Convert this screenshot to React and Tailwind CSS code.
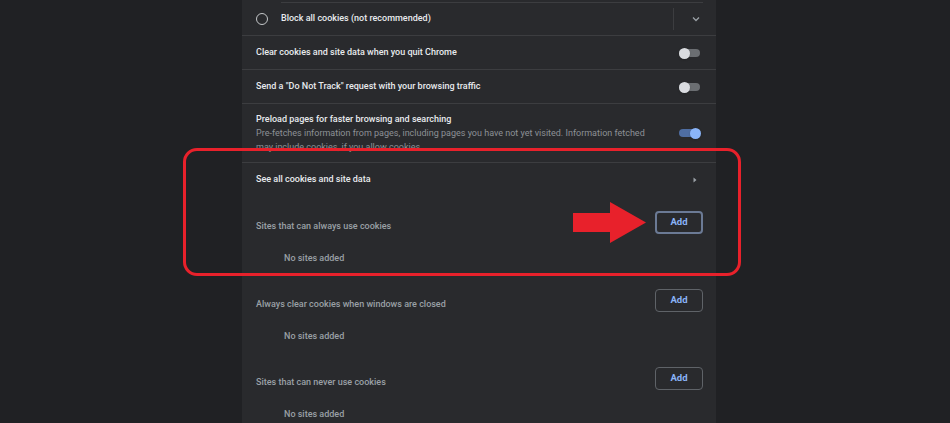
import React from 'react';

const Toggle = ({ on }) => (
  <div className="relative w-[22px] h-[12px] flex items-center">
    <div className={`w-[21px] h-[8px] rounded-full ${on ? 'bg-[#4f6ea3]' : 'bg-[#6b6e72]'}`} />
    <div
      className={`absolute top-[1px] w-[11px] h-[11px] rounded-full shadow ${on ? 'right-0 bg-[#8ab4f8]' : 'left-0 bg-[#dadce0]'}`}
    />
  </div>
);

const AddButton = ({ focused }) => (
  <button
    className={`w-[48px] h-[23px] mb-[9px] rounded-[4px] text-[9.5px] font-bold text-[#8ab4f8] ${focused ? 'border-2 border-[#6b7a95]' : 'border border-[#5f6368]'}`}
  >
    Add
  </button>
);

const Row = ({ children, className = '' }) => (
  <div className={`flex items-center justify-between pl-[14px] pr-[15px] border-t border-[#3c3d40] ${className}`}>
    {children}
  </div>
);

const SiteSection = ({ label, focused }) => (
  <div className="pb-[14px]">
    <div className="flex items-center justify-between h-[40px] pl-[14px] pr-[13px]">
      <span className="text-[9px] font-medium text-[#9aa0a6]">{label}</span>
      <AddButton focused={focused} />
    </div>
    <div className="h-[24px] flex items-center pl-[42px] text-[9px] font-medium text-[#9aa0a6]">
      No sites added
    </div>
  </div>
);

export default function App() {
  return (
    <div
      className="relative w-[950px] h-[423px] overflow-hidden bg-[#202124] flex items-start pl-[242px]"
      style={{ fontFamily: 'Roboto, "Liberation Sans", sans-serif' }}
    >
      <div className="w-[474px] min-h-[423px] bg-[#292a2d]">
        {/* radio option: block all */}
        <div className="h-[2px]" />
        <div className="ml-[39px] mr-[13px] border-t border-[#3c3d40]" />
        <div className="flex items-center h-[32px] pl-[14px] pr-[16px]">
          <div className="w-[12px] h-[12px] rounded-full border-[1.5px] border-[#c4c7c9]" />
          <span className="ml-[13px] text-[9px] font-medium text-[#e8eaed] flex-1">
            Block all cookies (not recommended)
          </span>
          <div className="w-px h-[22px] bg-[#3c3d40] mr-[17px]" />
          <svg width="10" height="10" viewBox="0 0 10 10" className="mr-[-1px]">
            <path d="M2 3.5 L5 6.5 L8 3.5" fill="none" stroke="#9aa0a6" strokeWidth="1.3" />
          </svg>
        </div>

        <Row className="h-[34px]">
          <span className="text-[9px] font-medium text-[#e8eaed]">Clear cookies and site data when you quit Chrome</span>
          <Toggle />
        </Row>
        <Row className="h-[34px]">
          <span className="text-[9px] font-medium text-[#e8eaed]">Send a "Do Not Track" request with your browsing traffic</span>
          <Toggle />
        </Row>
        <Row className="pt-[8px] pb-[8px]">
          <div className="flex flex-col w-[400px]">
            <span className="text-[9px] leading-[14px] font-medium text-[#e8eaed]">Preload pages for faster browsing and searching</span>
            <span className="text-[9px] leading-[14px] text-[#8d9196]">
              Pre-fetches information from pages, including pages you have not yet visited. Information fetched may include cookies, if you allow cookies.
            </span>
          </div>
          <Toggle on />
        </Row>
        <Row className="h-[35px]">
          <span className="text-[9px] font-medium text-[#e8eaed]">See all cookies and site data</span>
          <svg width="8" height="8" viewBox="0 0 8 8" className="mr-[2px]">
            <path d="M2.5 1.5 L5.5 4 L2.5 6.5 Z" fill="#9aa0a6" />
          </svg>
        </Row>

        <div className="h-[10px]" />
        <SiteSection label="Sites that can always use cookies" focused />
        <SiteSection label="Always clear cookies when windows are closed" />
        <SiteSection label="Sites that can never use cookies" />
      </div>

      {/* red highlight */}
      <div className="absolute left-[183px] top-[148px] w-[558px] h-[128px] rounded-[14px] border-[3px] border-[#e8212b]" />
      <svg className="absolute left-[573px] top-[202px]" width="74" height="42" viewBox="0 0 74 42">
        <path d="M0 11 H37 V0 L73 20.5 L37 41 V30 H0 Z" fill="#e8212b" />
      </svg>
    </div>
  );
}
